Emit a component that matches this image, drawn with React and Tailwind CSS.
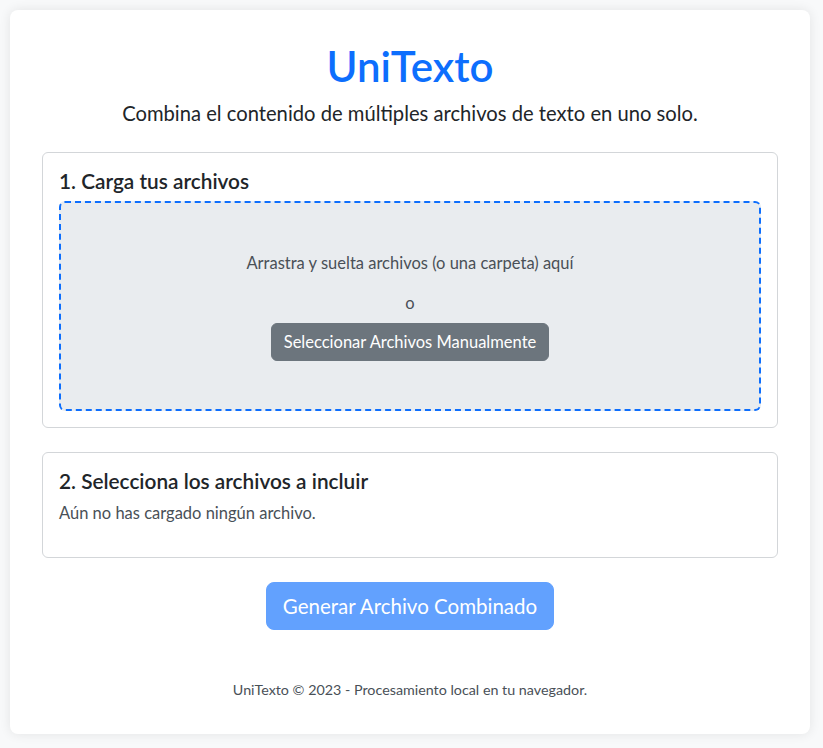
export default function App() {
  return (
    <div className="min-h-screen bg-[#f8f9fa] px-[10px] pt-[10px] pb-[14px] font-['Lato','Liberation_Sans',sans-serif] text-[#212529]">
      <main className="w-[800px] rounded-lg bg-white p-8 shadow-[0_0_12px_rgba(0,0,0,0.09)]">
        <header className="text-center">
          <h1 className="mb-2 text-[42px] leading-[48px] font-semibold text-[#0d6efd]">UniTexto</h1>
          <p className="mb-6 text-[20.2px] leading-[30px] font-normal">
            Combina el contenido de múltiples archivos de texto en uno solo.
          </p>
        </header>

        {/* Paso 1 */}
        <section className="mb-6 rounded-md border border-[#d3d6d9] p-4">
          <h2 className="mb-2 text-[20.8px] leading-6 font-semibold">1. Carga tus archivos</h2>
          <div className="rounded-md border-2 border-dashed border-[#0d6efd] bg-[#e9ecef] py-12 text-center text-[#495057]">
            <p className="mb-4 text-[16.5px] leading-6">Arrastra y suelta archivos (o una carpeta) aquí</p>
            <p className="mb-2 text-[16.5px] leading-6">o</p>
            <button className="rounded-md border border-[#6c757d] bg-[#6c757d] px-3 py-1.5 text-[16.5px] leading-6 text-white">
              Seleccionar Archivos Manualmente
            </button>
          </div>
        </section>

        {/* Paso 2 */}
        <section className="mb-6 rounded-md border border-[#d3d6d9] p-4">
          <h2 className="mb-2 text-[20.8px] leading-6 font-semibold">2. Selecciona los archivos a incluir</h2>
          <p className="mb-4 text-[16.5px] leading-6 text-[#495057]">Aún no has cargado ningún archivo.</p>
        </section>

        <div className="text-center">
          <button
            disabled
            className="rounded-lg border border-[#62a1fe] bg-[#62a1fe] px-4 py-2 text-[20.5px] leading-[30px] text-white"
          >
            Generar Archivo Combinado
          </button>
        </div>

        <footer className="mt-12 text-center text-[14.3px] leading-6 text-[#495057]">
          UniTexto © 2023 - Procesamiento local en tu navegador.
        </footer>
      </main>
    </div>
  )
}
